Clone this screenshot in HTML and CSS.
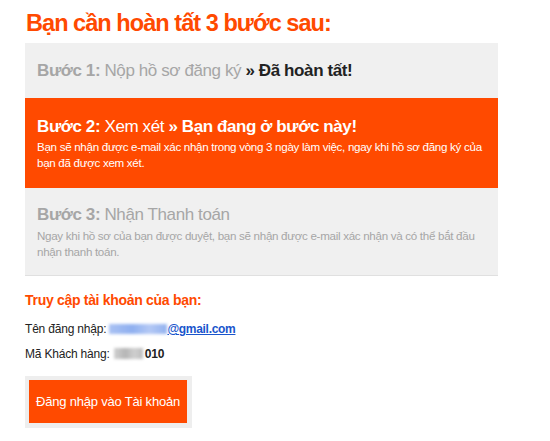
FILE: index.html
```html
<!DOCTYPE html>
<html lang="vi">
<head>
<meta charset="utf-8">
<link rel="stylesheet" href="styles.css">
</head>
<body>
<div class="page">
  <h1 class="title">Bạn cần hoàn tất 3 bước sau:</h1>
  <div class="step step-done">
    <div class="step-head"><b class="label">Bước 1:</b> Nộp hồ sơ đăng ký <b class="status">» Đã hoàn tất!</b></div>
  </div>
  <div class="step step-active">
    <div class="step-head"><b>Bước 2:</b> Xem xét <b>» Bạn đang ở bước này!</b></div>
    <p class="step-desc">Bạn sẽ nhận được e-mail xác nhận trong vòng 3 ngày làm việc, ngay khi hồ sơ đăng ký của bạn đã được xem xét.</p>
  </div>
  <div class="step step-next">
    <div class="step-head"><b>Bước 3:</b> Nhận Thanh toán</div>
    <p class="step-desc">Ngay khi hồ sơ của bạn được duyệt, bạn sẽ nhận được e-mail xác nhận và có thể bắt đầu nhận thanh toán.</p>
  </div>
  <h2 class="sub">Truy cập tài khoản của bạn:</h2>
  <p class="info">Tên đăng nhập: <a class="mail" href="#"><span class="blur blur-blue"></span>@gmail.com</a></p>
  <p class="info">Mã Khách hàng: <span class="blur blur-gray"></span><b>010</b></p>
  <div class="btn-wrap"><a class="btn" href="#">Đăng nhập vào Tài khoản</a></div>
</div>
</body>
</html>
```
FILE: styles.css
```css
html, body { margin: 0; padding: 0; background: #fff; }
body { font-family: "Liberation Sans", Arial, Helvetica, sans-serif; color: #222; }
.page { padding: 10px 0 0 25px; width: 473px; }
.title { margin: 0 0 0 1px; font-size: 23.5px; letter-spacing: -0.95px; font-weight: bold; color: #ff4a00; line-height: 26px; height: 33px; }
.step { padding: 0 12px; }
.step-head { font-size: 17px; line-height: 20px; letter-spacing: -0.4px; }
.step-desc { margin: 2px 0 0; font-size: 11.6px; line-height: 16px; letter-spacing: -0.3px; }
.step-done { background: #f0f0f0; height: 55px; display: flex; align-items: center; color: #a6a6a6; }
.step-done .label { color: #a6a6a6; }
.step-done .status { color: #222; }
.step-active { background: #ff4a00; color: #fff; height: 90px; padding-top: 19px; box-sizing: border-box; }
.step-next { background: #f0f0f0; color: #a6a6a6; height: 88px; padding-top: 17px; box-sizing: border-box; border-bottom: 1px solid #e0e0e0; }
.step-next .step-desc { margin-top: 3px; }
.sub { margin: 15px 0 0 0; font-size: 14px; line-height: 18px; letter-spacing: -0.3px; color: #ff4a00; font-weight: bold; }
.info { margin: 12px 0 0; font-size: 12px; line-height: 16px; letter-spacing: -0.2px; color: #222; }
.info + .info { margin-top: 9px; }
.mail { color: #1a55cc; font-weight: bold; text-decoration: underline; letter-spacing: -0.3px; }
.blur { display: inline-block; filter: blur(1.5px); vertical-align: -1px; }
.blur-blue { background: linear-gradient(90deg, #a9c1f3, #8fb0f0 40%, #b3c8f5 70%, #93b2ef); width: 58px; height: 10px; }
.blur-gray { background: linear-gradient(90deg, #d0d0d0, #b5b5b5 40%, #cfcfcf 70%, #bdbdbd); width: 29px; height: 11px; margin: 0 2px 0 1px; }
.btn-wrap { margin-top: 14px; display: inline-block; background: #eee; padding: 4px 5px 5px 4px; }
.btn { display: block; background: #ff4a00; color: #fff; text-decoration: none; font-size: 13px; line-height: 43px; width: 158px; text-align: center; white-space: nowrap; letter-spacing: -0.2px; }
```
